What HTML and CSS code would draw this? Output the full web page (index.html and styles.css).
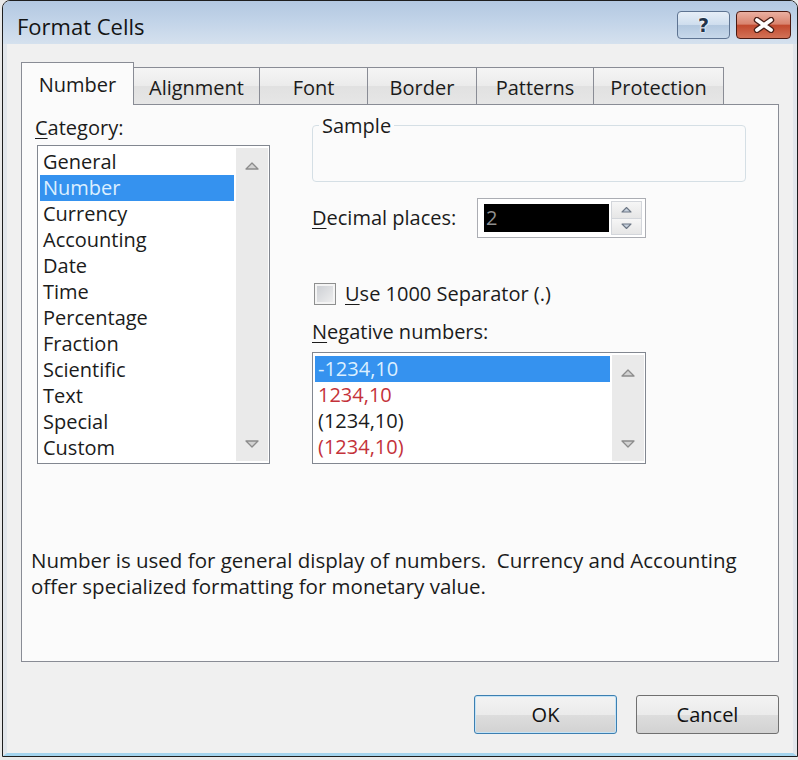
FILE: index.html
```html
<!DOCTYPE html>
<html lang="en">
<head>
  <meta charset="UTF-8" />
  <title>Format Cells</title>
  <link rel="stylesheet" href="styles.css">
</head>
<body>
  <div class="window">
    <div class="titlebar">
      <span class="title">Format Cells</span>
      <div class="caption-buttons">
        <span class="cap-btn help">?</span>
        <span class="cap-btn close">
          <svg width="24" height="16" viewBox="0 0 24 16">
            <path d="M5 3 L19 13 M19 3 L5 13" stroke="#4a2018" stroke-width="6.4" stroke-linecap="round"/>
            <path d="M5 3 L19 13 M19 3 L5 13" stroke="#ffffff" stroke-width="3.8" stroke-linecap="round"/>
          </svg>
        </span>
      </div>
    </div>

    <div class="client">
      <div class="tabs">
        <div class="tab active">Number</div>
        <div class="tab tab-alignment">Alignment</div>
        <div class="tab tab-font">Font</div>
        <div class="tab tab-border">Border</div>
        <div class="tab tab-patterns">Patterns</div>
        <div class="tab tab-protection">Protection</div>
      </div>

      <div class="panel">
        <div class="panel-top">
          <div class="col-left">
            <div class="field-label"><u>C</u>ategory:</div>
            <div class="listbox category">
              <ul class="items">
                <li>General</li>
                <li class="selected">Number</li>
                <li>Currency</li>
                <li>Accounting</li>
                <li>Date</li>
                <li>Time</li>
                <li>Percentage</li>
                <li>Fraction</li>
                <li>Scientific</li>
                <li>Text</li>
                <li>Special</li>
                <li>Custom</li>
              </ul>
              <div class="scrollbar">
                <span class="scroll-btn">
                  <svg width="14" height="9" viewBox="0 0 14 9"><path d="M1 8 L7 2 L13 8 Z" fill="#d2d2d2" stroke="#8c8c8c" stroke-width="1.3" stroke-linejoin="round"/></svg>
                </span>
                <span class="scroll-btn">
                  <svg width="14" height="9" viewBox="0 0 14 9"><path d="M1 1 L7 7 L13 1 Z" fill="#d2d2d2" stroke="#8c8c8c" stroke-width="1.3" stroke-linejoin="round"/></svg>
                </span>
              </div>
            </div>
          </div>

          <div class="col-right">
            <div class="sample">
              <span class="sample-label">Sample</span>
            </div>

            <div class="decimals">
              <span class="decimals-label"><u>D</u>ecimal places:</span>
              <div class="spin">
                <span class="spin-value">2</span>
                <div class="spin-buttons">
                  <span class="spin-btn">
                    <svg width="11" height="7" viewBox="0 0 11 7"><path d="M1 6 L5.5 1.5 L10 6 Z" fill="#c6d0dc" stroke="#6d7785" stroke-width="1.1" stroke-linejoin="round"/></svg>
                  </span>
                  <span class="spin-btn">
                    <svg width="11" height="7" viewBox="0 0 11 7"><path d="M1 1 L5.5 5.5 L10 1 Z" fill="#c6d0dc" stroke="#6d7785" stroke-width="1.1" stroke-linejoin="round"/></svg>
                  </span>
                </div>
              </div>
            </div>

            <div class="check-row">
              <span class="checkbox"></span>
              <span class="check-label"><u>U</u>se 1000 Separator (.)</span>
            </div>

            <div class="field-label neg-label"><u>N</u>egative numbers:</div>
            <div class="listbox negative">
              <ul class="items">
                <li class="selected">-1234,10</li>
                <li class="red">1234,10</li>
                <li>(1234,10)</li>
                <li class="red">(1234,10)</li>
              </ul>
              <div class="scrollbar">
                <span class="scroll-btn">
                  <svg width="14" height="9" viewBox="0 0 14 9"><path d="M1 8 L7 2 L13 8 Z" fill="#d2d2d2" stroke="#8c8c8c" stroke-width="1.3" stroke-linejoin="round"/></svg>
                </span>
                <span class="scroll-btn">
                  <svg width="14" height="9" viewBox="0 0 14 9"><path d="M1 1 L7 7 L13 1 Z" fill="#d2d2d2" stroke="#8c8c8c" stroke-width="1.3" stroke-linejoin="round"/></svg>
                </span>
              </div>
            </div>
          </div>
        </div>

        <p class="description">Number is used for general display of numbers.&nbsp; Currency and Accounting<br>offer specialized formatting for monetary value.</p>
      </div>

      <div class="buttons">
        <button class="btn default">OK</button>
        <button class="btn">Cancel</button>
      </div>
    </div>
  </div>
</body>
</html>
```

FILE: styles.css
```css
body {
  margin: 0;
  background: #e9e9e9;
  font-family: "Open Sans", "Noto Sans", sans-serif;
  font-size: 20px;
  color: #1b1b1b;
}

.window {
  box-sizing: border-box;
  width: 796px;
  height: 757px;
  margin-left: 2px;
  border: 1px solid #1e1e1e;
  border-radius: 8px 8px 0 0;
  background: #f0f0f0;
  overflow: hidden;
  display: flex;
  flex-direction: column;
}

/* title bar */

.titlebar {
  height: 43px;
  flex: none;
  display: flex;
  justify-content: space-between;
  align-items: flex-start;
  padding: 0 6px 0 14px;
  background: linear-gradient(to bottom, #b3c8e1 0%, #c1d3e8 45%, #d5e1ee 100%);
}

.title {
  margin-top: 13px;
  font-size: 22px;
  line-height: 24px;
  color: #141414;
}

.caption-buttons {
  display: flex;
  gap: 6px;
  margin-top: 10px;
}

.cap-btn {
  box-sizing: border-box;
  height: 28px;
  border-radius: 4px;
  display: flex;
  align-items: center;
  justify-content: center;
}

.help {
  width: 53px;
  border: 1px solid #5e7492;
  background: linear-gradient(to bottom, #e6eef7 0%, #cfdeee 48%, #b3c8df 52%, #c7d8ea 100%);
  font-family: "DejaVu Sans", sans-serif;
  font-weight: bold;
  font-size: 19px;
  color: #22344a;
  text-shadow: 0 0 1px #fff, 0 0 2px #fff, 0 0 2px #fff;
}

.close {
  width: 55px;
  border: 1px solid #4a1a12;
  background: linear-gradient(to bottom, #eab0a1 0%, #d9846f 46%, #c24a2f 52%, #d27257 100%);
}

/* client area */

.client {
  flex: 1;
  border: solid #e2e6eb;
  border-width: 0 4px 3px;
  border-bottom-color: #a4d4ee;
  padding: 18px 0 0 14px;
}

.tabs {
  display: flex;
  align-items: flex-end;
  height: 42px;
  position: relative;
  z-index: 1;
}

.tab {
  box-sizing: border-box;
  height: 37px;
  margin-left: -1px;
  padding-top: 8px;
  border: 1px solid #898c95;
  border-bottom: 0;
  background: linear-gradient(to bottom, #f5f5f5 0%, #ebebeb 50%, #e1e1e1 51%, #e6e6e6 100%);
  line-height: 24px;
  text-align: center;
}

.tab.active {
  width: 113px;
  height: 43px;
  margin-left: 0;
  margin-bottom: -1px;
  padding-top: 10px;
  background: #fbfbfb;
}

.tab-alignment { width: 127px; }
.tab-font { width: 109px; }
.tab-border { width: 110px; }
.tab-patterns { width: 118px; }
.tab-protection { width: 131px; }

.panel {
  box-sizing: border-box;
  width: 758px;
  height: 558px;
  padding: 11px 0 0 9px;
  border: 1px solid #898c95;
  background: #fbfbfb;
}

.panel-top {
  display: flex;
  padding-left: 4px;
}

.col-left {
  width: 235px;
}

.col-right {
  width: 434px;
  margin-left: 42px;
}

.field-label {
  line-height: 24px;
}

u {
  text-decoration-thickness: 1px;
  text-underline-offset: 3px;
}

/* list boxes */

.listbox {
  box-sizing: border-box;
  display: flex;
  padding: 2px 1px 2px 2px;
  border: 1px solid #828790;
  background: #ffffff;
}

.category {
  width: 233px;
  height: 319px;
  margin: 5px 0 0 2px;
}

.negative {
  width: 334px;
  height: 112px;
  margin-top: 8px;
}

.items {
  flex: 1;
  list-style: none;
  margin: 0;
  padding: 1px 0 0;
}

.items li {
  height: 26px;
  padding-left: 3px;
  line-height: 26px;
  white-space: nowrap;
}

.items li.selected {
  background: #3592ef;
  color: #dcefff;
}

.items li.red {
  color: #c4323a;
}

.scrollbar {
  width: 32px;
  margin-left: 2px;
  display: flex;
  flex-direction: column;
  justify-content: space-between;
  background: #eaeaea;
}

.scroll-btn {
  height: 34px;
  display: flex;
  align-items: center;
  justify-content: center;
}

/* right column */

.sample {
  position: relative;
  box-sizing: border-box;
  height: 57px;
  margin-top: 9px;
  border: 1px solid #d5dfe5;
  border-radius: 4px;
}

.sample-label {
  position: absolute;
  top: -12px;
  left: 6px;
  padding: 0 3px;
  background: #fbfbfb;
  line-height: 24px;
}

.decimals {
  display: flex;
  align-items: center;
  margin-top: 16px;
}

.decimals-label {
  width: 165px;
  line-height: 24px;
}

.spin {
  box-sizing: border-box;
  width: 169px;
  height: 40px;
  display: flex;
  padding: 2px 3px 2px 6px;
  border: 1px solid #abadb3;
  background: #ffffff;
}

.spin-value {
  width: 125px;
  margin: 3px 0;
  padding-left: 2px;
  box-sizing: border-box;
  background: #000000;
  color: #8f8f8f;
  line-height: 28px;
}

.spin-buttons {
  width: 31px;
  margin-left: 2px;
  display: flex;
  flex-direction: column;
}

.spin-btn {
  flex: 1;
  display: flex;
  align-items: center;
  justify-content: center;
  border: 1px solid #d3d6db;
  background: linear-gradient(to bottom, #f6f6f6, #e6e6e6);
}

.spin-btn + .spin-btn {
  border-top: 0;
}

.check-row {
  display: flex;
  align-items: center;
  height: 24px;
  margin-top: 44px;
}

.checkbox {
  box-sizing: border-box;
  width: 22px;
  height: 22px;
  margin-left: 2px;
  border: 1px solid #8e8f8f;
  background: linear-gradient(135deg, #c9ccd1, #f1f1f1);
  box-shadow: inset 0 0 0 2px #f4f4f4;
}

.check-label {
  margin-left: 9px;
  line-height: 24px;
}

.neg-label {
  margin-top: 14px;
}

.description {
  margin: 83px 0 0;
  font-size: 20.5px;
  line-height: 26px;
}

/* dialog buttons */

.buttons {
  width: 758px;
  display: flex;
  justify-content: flex-end;
  gap: 19px;
  margin-top: 33px;
}

.btn {
  box-sizing: border-box;
  width: 143px;
  height: 39px;
  padding: 0;
  border: 1px solid #707070;
  border-radius: 3px;
  background: linear-gradient(to bottom, #f3f3f3 0%, #ebebeb 50%, #dddddd 51%, #d2d2d2 100%);
  font: inherit;
  color: #111111;
}

.btn.default {
  border-color: #3c7fb1;
  box-shadow: inset 0 0 0 1px #c4e3f6;
}
```
